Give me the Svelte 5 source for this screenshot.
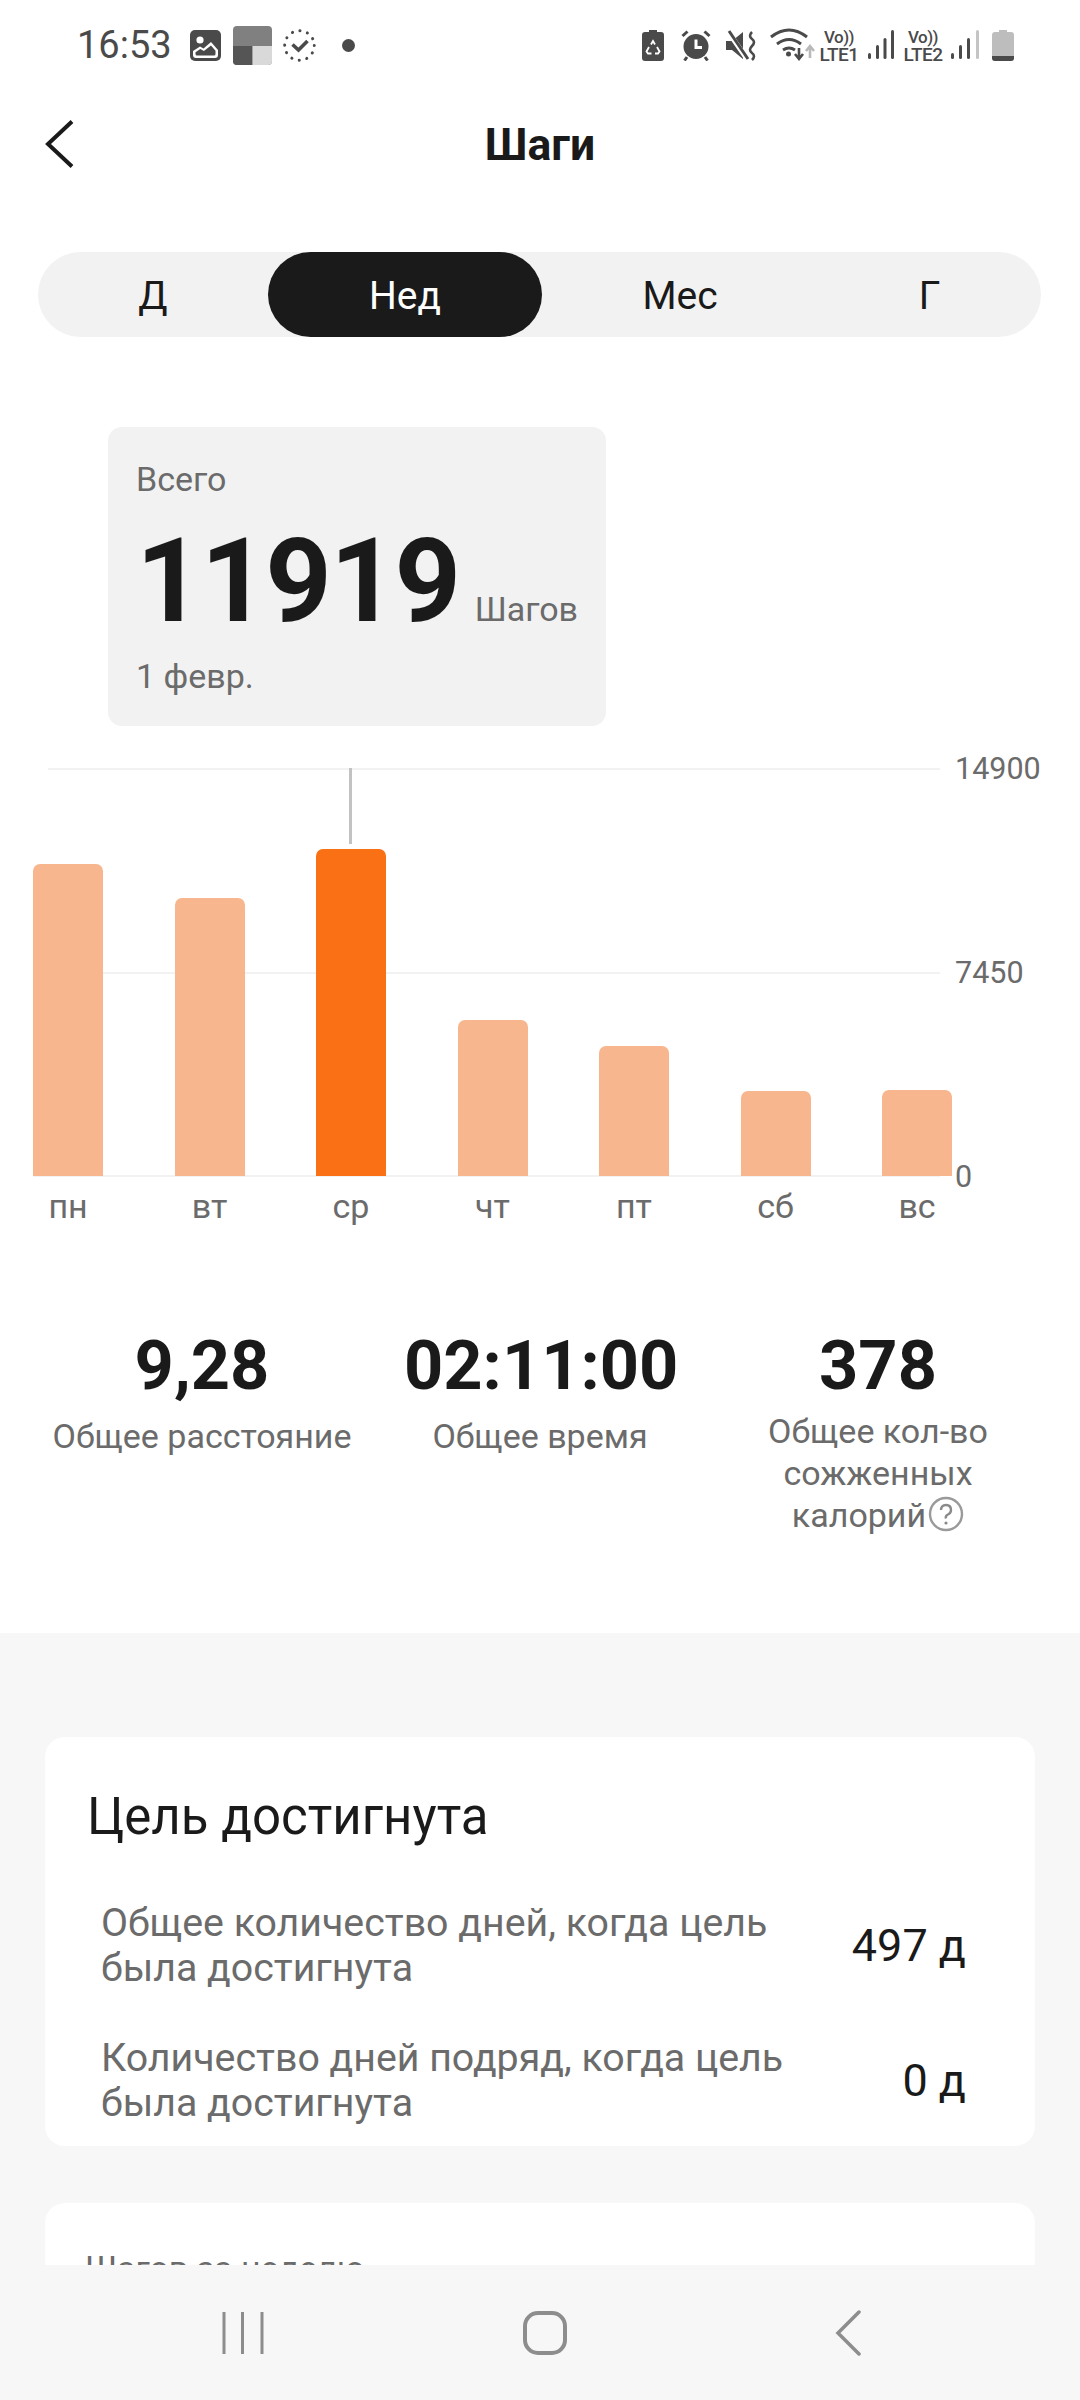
<script lang="ts">
  const tabs = ["Д", "Нед", "Мес", "Г"];
  const days = [
    { label: "пн", value: 11405 },
    { label: "вт", value: 10155 },
    { label: "ср", value: 11935, active: true },
    { label: "чт", value: 5695 },
    { label: "пт", value: 4735 },
    { label: "сб", value: 3120 },
    { label: "вс", value: 3140 }
  ];
  const maxValue = 14900;
  const plotHeight = 408;
  const goals = [
    { text: "Общее количество дней, когда цель была достигнута", value: "497 д" },
    { text: "Количество дней подряд, когда цель была достигнута", value: "0 д" }
  ];
</script>

<div class="screen">
  <div class="status">
    <div class="status-left">
      <span class="time">16:53</span>
      <svg width="31" height="31" viewBox="0 0 31 31">
        <rect width="31" height="31" rx="5" fill="#4a4a4a" />
        <circle cx="10" cy="10" r="3.600" fill="#fff" />
        <path d="M3 25v-4l7-4.500 3.500 2L21 12l7 8v5q0 3-3 3H6q-3 0-3-3z" fill="#fff" />
        <path d="M5.500 24v-1.800l4.800-3.200 3.600 2L21 15.500l4.500 5.200V24q0 1.500-1.500 1.500H7q-1.500 0-1.500-1.500z" fill="#4a4a4a" />
      </svg>
      <svg class="tile" width="39" height="39" viewBox="0 0 39 39">
        <rect width="39" height="39" rx="4" fill="#808080" />
        <path d="M0 20h19.500v19H4q-4 0-4-4z" fill="#555" />
        <path d="M19.500 20H39v15q0 4-4 4H19.500z" fill="#d9d9d9" />
      </svg>
      <svg class="clock" width="33" height="33" viewBox="0 0 33 33">
        <circle cx="16.500" cy="16.500" r="14.800" fill="none" stroke="#4a4a4a" stroke-width="3" stroke-linecap="round" stroke-dasharray="0.100 7.650" />
        <path d="M9.500 15.500l6 5.500 9-9" fill="none" stroke="#4a4a4a" stroke-width="3.600" />
      </svg>
      <span class="dot"></span>
    </div>
    <div class="status-right">
      <svg class="ic-batsave" width="22" height="31" viewBox="0 0 22 31">
        <path d="M7 0h8v2h4q3 0 3 3v23q0 3-3 3H3q-3 0-3-3V5q0-3 3-3h4z" fill="#4a4a4a" />
        <path d="M9 14.500l2-3.500 2 3.500M15 17l2.500 4.500-1.500 2h-3M9.500 23.500H6l-1.500-2L7 17" fill="none" stroke="#fff" stroke-width="1.800" />
      </svg>
      <svg class="ic-alarm" width="30" height="31" viewBox="0 0 30 31">
        <circle cx="15" cy="16.500" r="12.500" fill="#4a4a4a" />
        <path d="M15 9.500v8h6" fill="none" stroke="#fff" stroke-width="3" />
        <path d="M1.500 6l5-4.500M28.500 6l-5-4.500M6 27l-2.500 3.500M24 27l2.500 3.500" stroke="#4a4a4a" stroke-width="3" />
      </svg>
      <svg class="ic-mute" width="30" height="31" viewBox="0 0 30 31">
        <path d="M0 11h6l11-9v27L6 20H0z" fill="#4a4a4a" />
        <path d="M1 0l20 29" stroke="#fff" stroke-width="5" />
        <path d="M3 1l19 28" stroke="#4a4a4a" stroke-width="3" />
        <path d="M26 2q-4 4 0 7t0 7 0 7 0 7" fill="none" stroke="#4a4a4a" stroke-width="2.600" />
      </svg>
      <svg class="ic-wifi" width="45" height="34" viewBox="0 0 45 34">
        <path d="M1 9q18-14 36 0M7 16q12-9 24 0M13 22q6-4 12 0" fill="none" stroke="#4a4a4a" stroke-width="3" />
        <circle cx="18.500" cy="26" r="2.500" fill="#4a4a4a" />
        <path d="M29 20v10M25 26l4 5 4-5" fill="none" stroke="#4a4a4a" stroke-width="2.600" />
        <path d="M40 30V19M36 23l4-5 4 5" fill="none" stroke="#b9b9b9" stroke-width="2.600" />
      </svg>
      <span class="net n1"><span class="vo">Vo))</span><span class="lte">LTE1</span></span>
      <svg class="ic-sig1" width="26" height="30" viewBox="0 0 26 30">
        <rect x="0" y="23" width="3" height="6" rx="1.500" fill="#4a4a4a" />
        <rect x="8" y="15" width="3" height="14" rx="1.500" fill="#4a4a4a" />
        <rect x="15.500" y="8" width="3" height="21" rx="1.500" fill="#4a4a4a" />
        <rect x="23" y="0" width="3" height="29" rx="1.500" fill="#4a4a4a" />
      </svg>
      <span class="net n2"><span class="vo">Vo))</span><span class="lte">LTE2</span></span>
      <svg class="ic-sig2" width="28" height="30" viewBox="0 0 28 30">
        <rect x="0" y="23" width="3" height="6" rx="1.500" fill="#4a4a4a" />
        <rect x="8" y="15" width="3" height="14" rx="1.500" fill="#4a4a4a" />
        <rect x="16" y="8" width="3" height="21" rx="1.500" fill="#4a4a4a" />
        <rect x="25" y="0" width="3" height="29" rx="1.500" fill="#c4c4c4" />
      </svg>
      <svg class="ic-bat" width="22" height="31" viewBox="0 0 22 31">
        <path d="M7 0h8v2h4q3 0 3 3v23q0 3-3 3H3q-3 0-3-3V5q0-3 3-3h4z" fill="#bdbdbd" />
        <path d="M0 26h22v2q0 3-3 3H3q-3 0-3-3z" fill="#4a4a4a" />
      </svg>
    </div>
  </div>

  <header class="topbar">
    <svg class="back" width="30" height="48" viewBox="0 0 30 48">
      <path d="M27 1.500L3 24l24 22.500" fill="none" stroke="#1a1a1a" stroke-width="4" />
    </svg>
    <h1>Шаги</h1>
  </header>

  <div class="tabs">
    {#each tabs as tab, i}
      <div class="tab" class:selected={i === 1}>{tab}</div>
    {/each}
  </div>

  <div class="summary">
    <div class="summary-label">Всего</div>
    <div class="summary-main"><span class="big">11919</span><span class="unit">Шагов</span></div>
    <div class="summary-label">1 февр.</div>
  </div>

  <div class="chart">
    <div class="plot">
      <div class="grid g-top"><span>14900</span></div>
      <div class="grid g-mid"><span>7450</span></div>
      <div class="grid g-bottom"><span>0</span></div>
      {#each days as day}
        <div class="slot">
          {#if day.active}<div class="marker"></div>{/if}
          <div class="bar" class:active={day.active} style="height: {(day.value / maxValue) * plotHeight}px"></div>
        </div>
      {/each}
    </div>
    <div class="labels">
      {#each days as day}
        <div class="label">{day.label}</div>
      {/each}
    </div>
  </div>

  <div class="stats">
    <div class="stat">
      <div class="stat-value">9,28</div>
      <div class="stat-label">Общее расстояние</div>
    </div>
    <div class="stat">
      <div class="stat-value">02:11:00</div>
      <div class="stat-label">Общее время</div>
    </div>
    <div class="stat">
      <div class="stat-value">378</div>
      <div class="stat-label multi">Общее кол-во сожженных калорий<svg class="help" width="36" height="36" viewBox="0 0 36 36">
          <circle cx="18" cy="18" r="16" fill="none" stroke="#9a9a9a" stroke-width="2.400" />
          <path d="M13 14q0-5 5-5t5 5q0 3-3 4.500t-2 4" fill="none" stroke="#8a8a8a" stroke-width="2.400" />
          <circle cx="18" cy="27" r="1.600" fill="#8a8a8a" />
        </svg></div>
    </div>
  </div>

  <div class="lower">
    <section class="card goals">
      <h2>Цель достигнута</h2>
      {#each goals as goal}
        <div class="goal">
          <div class="goal-text">{goal.text}</div>
          <div class="goal-value">{goal.value}</div>
        </div>
      {/each}
    </section>
    <section class="card week">
      <div class="week-title">Шагов за неделю</div>
    </section>
  </div>

  <nav class="navbar">
    <svg width="42" height="44" viewBox="0 0 42 44">
      <path d="M2 1v42M20.500 1v42M40 1v42" stroke="#8d8d8d" stroke-width="3" fill="none" />
    </svg>
    <svg width="44" height="44" viewBox="0 0 44 44">
      <rect x="2" y="2" width="40" height="40" rx="13" fill="none" stroke="#8d8d8d" stroke-width="4" />
    </svg>
    <svg width="26" height="46" viewBox="0 0 26 46">
      <path d="M24 2L3 23l21 21" fill="none" stroke="#8d8d8d" stroke-width="3.500" stroke-linecap="round" />
    </svg>
  </nav>
</div>

<style>
  :global(body) {
    margin: 0;
    background: #fff;
  }

  .screen {
    width: 1080px;
    height: 2400px;
    position: relative;
    overflow: hidden;
    font-family: Roboto, "Noto Sans", sans-serif;
    color: #1a1a1a;
    background: #fff;
  }

  .status {
    height: 90px;
    box-sizing: border-box;
    padding: 24px 66px 0 77px;
    display: flex;
    justify-content: space-between;
    align-items: flex-start;
    color: #4a4a4a;
  }

  .status-left,
  .status-right {
    display: flex;
    align-items: center;
    height: 42px;
  }

  .time {
    font-size: 38px;
    width: 113px;
  }

  .tile {
    margin-left: 12px;
  }

  .clock {
    margin-left: 11px;
  }

  .dot {
    width: 13px;
    height: 13px;
    border-radius: 50%;
    background: #4a4a4a;
    margin-left: 26px;
  }

  .ic-alarm {
    margin-left: 17px;
  }

  .ic-mute {
    margin-left: 15px;
  }

  .ic-wifi {
    margin-left: 14px;
  }

  .net {
    display: flex;
    flex-direction: column;
    align-items: center;
    width: 38px;
    font-size: 19px;
    line-height: 17px;
    font-weight: 500;
    letter-spacing: -0.5px;
    white-space: nowrap;
    margin-top: 2px;
  }

  .n1 {
    margin-left: 5px;
  }

  .n2 {
    margin-left: 9px;
    width: 40px;
  }

  .ic-sig1 {
    margin-left: 10px;
  }

  .ic-sig2 {
    margin-left: 8px;
  }

  .ic-bat {
    margin-left: 13px;
  }

  .vo {
    font-size: 17px;
  }

  .topbar {
    height: 110px;
    display: flex;
    align-items: center;
    justify-content: center;
    position: relative;
  }

  .back {
    position: absolute;
    left: 45px;
    top: 30px;
  }

  h1 {
    margin: 0;
    font-size: 44.500px;
    font-weight: 700;
  }

  .tabs {
    margin: 52px 39px 0 38px;
    height: 85px;
    border-radius: 43px;
    background: #f2f2f2;
    display: grid;
    grid-template-columns: 230px 274px 276px 1fr;
  }

  .tab {
    display: flex;
    align-items: center;
    justify-content: center;
    font-size: 39px;
    border-radius: 43px;
    padding-top: 2px;
    box-sizing: border-box;
  }

  .selected {
    background: #1a1a1a;
    color: #fff;
  }

  .summary {
    margin: 90px 0 0 108px;
    width: 498px;
    height: 299px;
    box-sizing: border-box;
    padding: 31px 28px 0;
    background: #f2f2f2;
    border-radius: 14px;
    color: #6b6b6b;
  }

  .summary-label {
    font-size: 34px;
    line-height: 42px;
  }

  .summary-main {
    display: flex;
    align-items: baseline;
    justify-content: space-between;
    height: 142px;
    margin: 10px 0 3px;
  }

  .big {
    font-size: 116px;
    line-height: 142px;
    font-weight: 700;
    letter-spacing: -1.900px;
    color: #1a1a1a;
  }

  .unit {
    font-size: 34px;
  }

  .chart {
    margin-top: 42px;
    position: relative;
  }

  .plot {
    height: 408px;
    display: flex;
    align-items: flex-end;
    gap: 71.500px;
    padding-left: 33px;
    position: relative;
  }

  .grid {
    position: absolute;
    left: 48px;
    width: 892px;
    height: 2px;
    background: #f2f2f2;
  }

  .grid span {
    position: absolute;
    left: 907px;
    top: -17px;
    font-size: 30.500px;
    line-height: 36px;
    color: #6b6b6b;
  }

  .g-top {
    top: 0;
  }

  .g-mid {
    top: 204px;
  }

  .g-bottom {
    top: 407px;
    left: 33px;
    width: 907px;
  }

  .g-bottom span {
    left: 922px;
    top: -16px;
  }

  .slot {
    width: 70px;
    position: relative;
    display: flex;
    align-items: flex-end;
    height: 100%;
  }

  .bar {
    width: 100%;
    background: #f8b68e;
    border-radius: 7px 7px 0 0;
    position: relative;
  }

  .bar.active {
    background: #fa7014;
  }

  .marker {
    position: absolute;
    top: 0;
    left: 33px;
    width: 3px;
    height: 76px;
    background: #c2c2c2;
  }

  .labels {
    display: flex;
    gap: 71.500px;
    padding-left: 33px;
    margin-top: 11px;
  }

  .label {
    width: 70px;
    text-align: center;
    font-size: 34px;
    line-height: 38px;
    color: #6b6b6b;
  }

  .stats {
    margin-top: 103px;
    height: 305px;
    display: grid;
    grid-template-columns: 404px 272px 404px;
  }

  .stat {
    text-align: center;
  }

  .stat-value {
    font-size: 68.500px;
    line-height: 76px;
    font-weight: 700;
    white-space: nowrap;
  }

  .stat-label {
    margin-top: 11px;
    font-size: 34px;
    line-height: 42px;
    color: #6b6b6b;
  }

  .stat-label.multi {
    margin: 6px auto 0;
    width: 300px;
  }

  .help {
    vertical-align: -5px;
    margin-left: 2px;
  }

  .lower {
    height: 756px;
    background: #f7f7f7;
    padding: 104px 45px 0;
    box-sizing: border-box;
  }

  .card {
    background: #fff;
    border-radius: 20px;
  }

  .goals {
    height: 409px;
    box-sizing: border-box;
    padding: 50px 44px 0 42px;
    margin-bottom: 57px;
  }

  h2 {
    margin: 0 0 31px;
    font-size: 51px;
    line-height: 60px;
    font-weight: 400;
  }

  .goal {
    display: flex;
    align-items: center;
    justify-content: space-between;
    padding: 0 25px 0 14px;
    height: 135px;
  }

  .goal-text {
    font-size: 39.300px;
    line-height: 45px;
    color: #6b6b6b;
    width: 720px;
  }

  .goal-value {
    font-size: 45px;
    white-space: nowrap;
  }

  .week {
    height: 300px;
    padding: 45px 40px;
    box-sizing: border-box;
  }

  .week-title {
    font-size: 34px;
    color: #6b6b6b;
  }

  .navbar {
    position: absolute;
    left: 0;
    right: 0;
    bottom: 0;
    height: 135px;
    background: #f7f7f7;
    display: grid;
    grid-template-columns: 301px 312px 1fr;
    align-items: center;
    justify-items: start;
    padding-left: 222px;
    box-sizing: border-box;
  }
</style>
